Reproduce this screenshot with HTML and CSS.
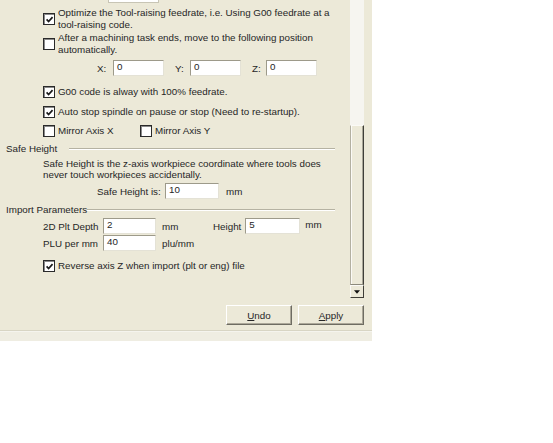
FILE: index.html
```html
<!DOCTYPE html>
<html>
<head>
<meta charset="utf-8">
<link rel="stylesheet" href="styles.css">
</head>
<body>
<div class="dialog">
  <div class="scroll-area">
    <div class="panel">
      <div class="cut-input"></div>

      <div class="opt opt-1">
        <span class="cb checked"><svg viewBox="0 0 10 10"><polyline points="1.8,4.8 4,7.2 8.4,2.4"/></svg></span>
        <span class="opt-text">Optimize the Tool-raising feedrate, i.e. Using G00 feedrate at a<br>tool-raising code.</span>
      </div>

      <div class="opt opt-2">
        <span class="cb"></span>
        <span class="opt-text">After a machining task ends, move to the following position<br>automatically.</span>
      </div>

      <div class="xyz">
        <span class="lbl lbl-x">X:</span><span class="field f-xyz">0</span>
        <span class="lbl lbl-y">Y:</span><span class="field f-xyz">0</span>
        <span class="lbl lbl-z">Z:</span><span class="field f-xyz">0</span>
      </div>

      <div class="opt opt-g00">
        <span class="cb checked"><svg viewBox="0 0 10 10"><polyline points="1.8,4.8 4,7.2 8.4,2.4"/></svg></span>
        <span class="opt-text">G00 code is alway with 100% feedrate.</span>
      </div>

      <div class="opt opt-auto">
        <span class="cb checked"><svg viewBox="0 0 10 10"><polyline points="1.8,4.8 4,7.2 8.4,2.4"/></svg></span>
        <span class="opt-text">Auto stop spindle on pause or stop (Need to re-startup).</span>
      </div>

      <div class="mirror">
        <div class="opt mirror-x">
          <span class="cb"></span>
          <span class="opt-text">Mirror Axis X</span>
        </div>
        <div class="opt mirror-y">
          <span class="cb"></span>
          <span class="opt-text">Mirror Axis Y</span>
        </div>
      </div>

      <div class="group group-safe">
        <span class="group-title">Safe Height</span>
        <span class="group-line line-safe"></span>
      </div>

      <div class="desc">Safe Height is the z-axis workpiece coordinate where tools does<br>never touch workpieces accidentally.</div>

      <div class="safe-row">
        <span class="safe-lbl">Safe Height is:</span>
        <span class="field f-safe">10</span>
        <span class="unit">mm</span>
      </div>

      <div class="group group-import">
        <span class="group-title">Import Parameters</span>
        <span class="group-line"></span>
      </div>

      <div class="imp-row imp-1">
        <span class="imp-lbl">2D Plt Depth</span>
        <span class="field f-imp">2</span>
        <span class="unit unit-1">mm</span>
        <span class="imp-lbl2">Height</span>
        <span class="field f-height">5</span>
        <span class="unit unit-h">mm</span>
      </div>

      <div class="imp-row imp-2">
        <span class="imp-lbl">PLU per mm</span>
        <span class="field f-imp">40</span>
        <span class="unit unit-1">plu/mm</span>
      </div>

      <div class="opt opt-rev">
        <span class="cb checked"><svg viewBox="0 0 10 10"><polyline points="1.8,4.8 4,7.2 8.4,2.4"/></svg></span>
        <span class="opt-text">Reverse axis Z when import (plt or eng) file</span>
      </div>
    </div>

    <div class="vscroll">
      <div class="track"></div>
      <div class="thumb"></div>
      <div class="arrow"><svg viewBox="0 0 7 4"><polygon points="0,0 7,0 3.5,4"/></svg></div>
    </div>
  </div>

  <div class="buttons">
    <button class="btn"><u>U</u>ndo</button>
    <button class="btn"><u>A</u>pply</button>
  </div>

  <div class="separator"></div>
  <div class="footer"></div>
</div>
</body>
</html>
```

FILE: styles.css
```css
html, body {
  margin: 0;
  padding: 0;
  background: #ffffff;
}

body {
  font-family: "Liberation Sans", Arial, sans-serif;
  font-size: 9.8px;
  color: #262626;
}

.dialog {
  width: 372px;
  height: 341px;
  background: #ece9d8;
  display: flex;
  flex-direction: column;
}

.scroll-area {
  display: flex;
  height: 298px;
}

.panel {
  width: 350px;
  position: relative;
  overflow: hidden;
  padding-top: 7px;
  box-sizing: border-box;
}

.cut-input {
  position: absolute;
  left: 108px;
  top: -14px;
  width: 49px;
  height: 15px;
  background: #fff;
  border: 1px solid #c8c5b5;
  border-top-color: #9a9888;
}

.opt {
  display: flex;
  align-items: center;
  padding-left: 43px;
  line-height: 12px;
}

.opt-text {
  margin-left: 3px;
}

.cb {
  width: 10px;
  height: 10px;
  flex: none;
  background: #fff;
  border: 1px solid #2a2a2a;
  box-shadow: inset 1px 1px 0 #8a8a8a;
  display: flex;
  align-items: center;
  justify-content: center;
}

.cb svg {
  width: 9px;
  height: 9px;
}

.cb polyline {
  fill: none;
  stroke: #1a1a1a;
  stroke-width: 1.9;
}

.opt-2 {
  margin-top: 1px;
}

.field {
  display: inline-block;
  box-sizing: border-box;
  width: 51px;
  height: 16px;
  background: #fff;
  border-top: 1px solid #9d9a8a;
  border-left: 1px solid #9d9a8a;
  border-right: 1px solid #e4e2d6;
  border-bottom: 1px solid #e4e2d6;
  padding-left: 3px;
  line-height: 12px;
}

.xyz {
  display: flex;
  align-items: center;
  margin-top: 4px;
  padding-left: 97px;
}

.lbl {
  flex: none;
}

.lbl-x { width: 16px; }
.lbl-y { width: 15px; margin-left: 11px; }
.lbl-z { width: 14px; margin-left: 11px; }

.opt-g00 { margin-top: 10px; }
.opt-auto { margin-top: 8px; }

.mirror {
  display: flex;
  margin-top: 7px;
}

.mirror-x {
  width: 140px;
  box-sizing: border-box;
}

.mirror-y {
  padding-left: 0;
}

.group {
  display: flex;
  align-items: center;
  padding-left: 6px;
  line-height: 12px;
}

.group-line {
  flex: 1;
  height: 0;
  border-top: 1px solid #b5b2a2;
  border-bottom: 1px solid #ffffff;
  margin-right: 15px;
}

.line-safe {
  margin-left: 12px;
}

.group-safe { margin-top: 6px; }

.desc {
  padding-left: 43px;
  line-height: 11px;
  margin-top: 3px;
}

.safe-row {
  display: flex;
  align-items: center;
  margin-top: 3px;
  padding-left: 97px;
}

.safe-lbl {
  width: 68px;
}

.f-safe {
  width: 54px;
}

.unit {
  margin-left: 7px;
}

.group-import { margin-top: 5px; }

.imp-row {
  display: flex;
  align-items: center;
  padding-left: 43px;
}

.imp-1 { margin-top: 2px; }
.imp-2 { margin-top: 1px; }

.imp-lbl {
  width: 60px;
}

.f-imp {
  width: 53px;
}

.unit-1 {
  margin-left: 6px;
  width: 51px;
}

.imp-lbl2 {
  margin-right: 4px;
}

.f-height {
  width: 55px;
}

.unit-h {
  margin-left: 5px;
  align-self: flex-start;
  margin-top: 1px;
}

.opt-rev { margin-top: 9px; }

.vscroll {
  width: 14px;
  display: flex;
  flex-direction: column;
}

.track {
  height: 125px;
  background: #f6f5f0;
}

.thumb {
  flex: 1;
  box-sizing: border-box;
  background: #ece9d8;
  border-left: 1px solid #b3b0a1;
  border-top: 1px solid #fbfaf6;
  border-right: 1px solid #3f3e38;
  border-bottom: 1px solid #8c8a7c;
  box-shadow: inset 1px 0 0 #fbfaf6, inset -1px 0 0 #a9a798;
}

.arrow {
  height: 13px;
  box-sizing: border-box;
  background: #ece9d8;
  border-left: 1px solid #fbfaf6;
  border-top: 1px solid #fbfaf6;
  border-right: 1px solid #3f3e38;
  border-bottom: 1px solid #3f3e38;
  display: flex;
  align-items: center;
  justify-content: center;
}

.arrow svg {
  width: 6px;
  height: 4px;
}

.arrow polygon {
  fill: #111;
}

.buttons {
  display: flex;
  justify-content: flex-end;
  gap: 6px;
  margin-top: 7px;
  padding-right: 8px;
}

.btn {
  width: 66px;
  height: 20px;
  margin: 0;
  padding: 0;
  font-family: "Liberation Sans", Arial, sans-serif;
  font-size: 9.8px;
  color: #262626;
  background: #ece9d8;
  border-top: 1px solid #ffffff;
  border-left: 1px solid #ffffff;
  border-right: 1px solid #6e6c62;
  border-bottom: 1px solid #6e6c62;
  box-shadow: inset -1px -1px 0 #aca899;
}

.separator {
  margin-top: 5px;
  height: 0;
  border-top: 1px solid #d8d5c4;
  border-bottom: 1px solid #f5f4ee;
}

.footer {
  flex: 1;
  background: #efede2;
}
```
